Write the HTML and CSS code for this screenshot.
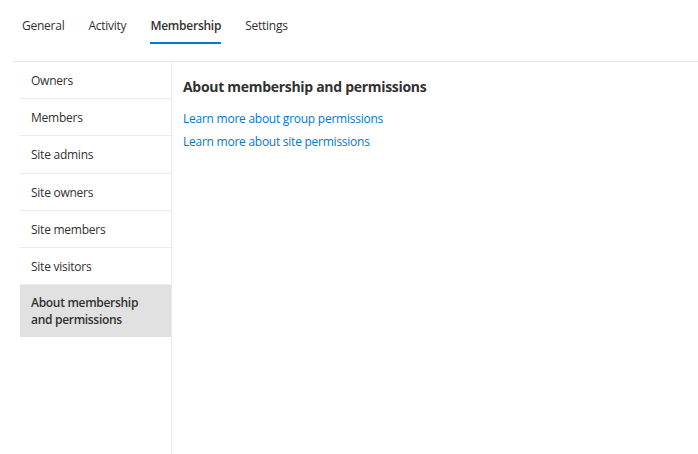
FILE: index.html
```html
<!DOCTYPE html>
<html lang="en">
<head>
<meta charset="utf-8">
<title>Membership</title>
<link rel="stylesheet" href="styles.css">
</head>
<body>
<div class="page">
  <nav class="tabs">
    <a class="tab">General</a>
    <a class="tab">Activity</a>
    <a class="tab active">Membership</a>
    <a class="tab">Settings</a>
  </nav>
  <div class="layout">
    <ul class="side">
      <li class="item">Owners</li>
      <li class="item">Members</li>
      <li class="item">Site admins</li>
      <li class="item">Site owners</li>
      <li class="item">Site members</li>
      <li class="item">Site visitors</li>
      <li class="item selected">About membership<br>and permissions</li>
    </ul>
    <main class="content">
      <h2 class="title">About membership and permissions</h2>
      <a class="link">Learn more about group permissions</a>
      <a class="link">Learn more about site permissions</a>
    </main>
  </div>
</div>
</body>
</html>
```
FILE: styles.css
```css
html, body {
  margin: 0;
  padding: 0;
  background: #ffffff;
  height: 100%;
}
body {
  font-family: "Open Sans", "Noto Sans", sans-serif;
  font-size: 12px;
  letter-spacing: -0.25px;
  color: #323130;
}
.page {
  padding-left: 13px;
  height: 100%;
  display: flex;
  flex-direction: column;
  box-sizing: border-box;
}
.tabs {
  display: flex;
  gap: 24px;
  padding-left: 9px;
  height: 61px;
  border-bottom: 1px solid #e8e8e8;
  box-sizing: content-box;
}
.tab {
  display: block;
  padding-top: 16px;
  height: 26px;
  line-height: 20px;
  color: #323130;
  border-bottom: 2px solid transparent;
  box-sizing: content-box;
}
.tab.active {
  font-weight: 600;
  border-bottom-color: #0078d4;
}
.layout {
  display: flex;
  flex: 1;
}
.side {
  list-style: none;
  margin: 0;
  padding: 0 0 0 7px;
  width: 151px;
  border-right: 1px solid #edebe9;
}
.item {
  padding: 9px 11px 7.2px;
  line-height: 20px;
  border-bottom: 1px solid #edebe9;
}
.item.selected {
  background: #e1e1e1;
  border-bottom: none;
  padding: 9px 11px 9px;
  line-height: 17px;
  font-weight: 600;
  letter-spacing: -0.3px;
}
.content {
  padding: 14px 11px;
  display: flex;
  flex-direction: column;
  align-items: flex-start;
}
.title {
  margin: 0 0 9px;
  font-size: 14px;
  font-weight: 700;
  letter-spacing: -0.3px;
  line-height: 22px;
  color: #323130;
}
.link {
  color: #0078d4;
  line-height: 23px;
  cursor: pointer;
}
```
